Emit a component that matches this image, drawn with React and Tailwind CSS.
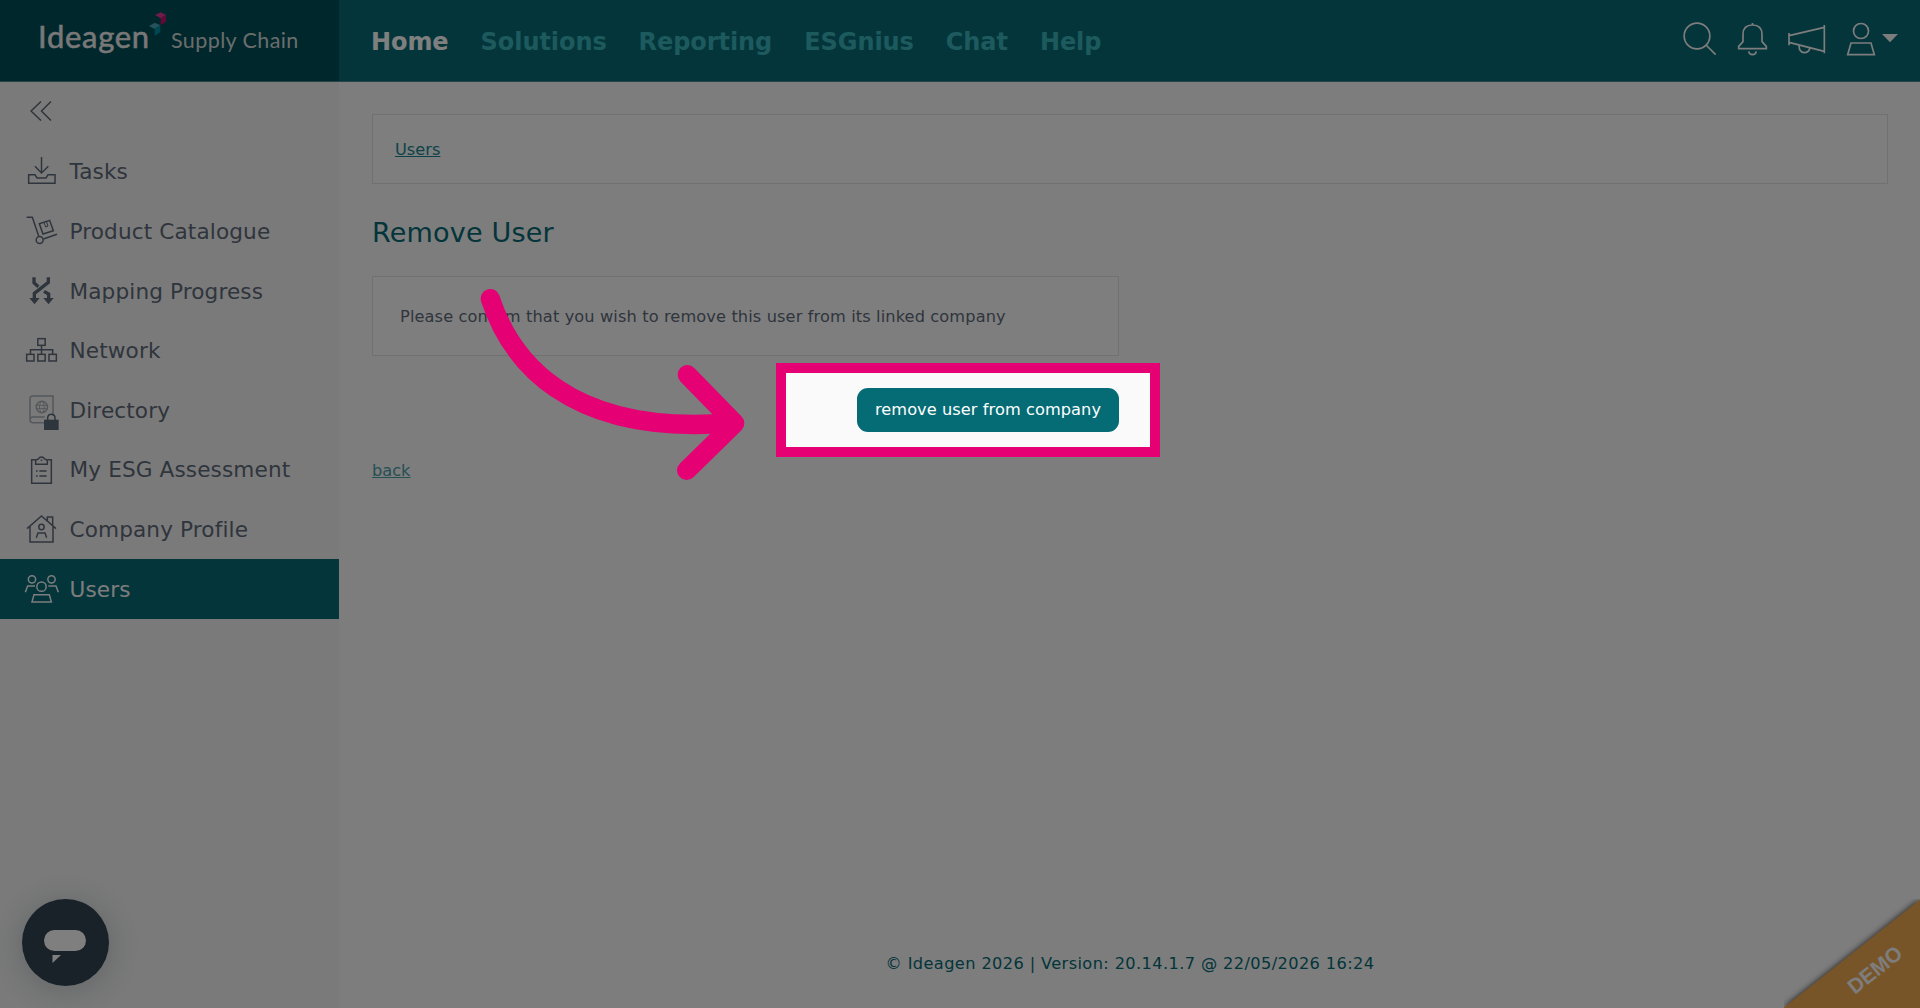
import React from 'react';

const ICON = 'size-9 shrink-0 fill-none stroke-current';

const TasksIcon = () => (
    <svg className={ICON} viewBox="72 70 108 108" strokeWidth="4.500">
        <path d="M124.500 82V129M105 110L124.500 130L145 110" />
        <path d="M86 135H105L111 145H138L144 135H165V161H86Z" />
    </svg>
);

const CatalogueIcon = () => (
    <svg className={ICON} viewBox="72 249 108 108" strokeWidth="4.500">
        <path d="M80 262H97L116 318M130 327L171 313" />
        <circle cx="119" cy="330" r="10.500" />
        <path d="M118 281L149 271L160 302L129 312Z" />
        <path d="M132 277L137 291L144 288L139 274" strokeWidth="3" />
    </svg>
);

const MappingIcon = () => (
    <svg className={ICON} viewBox="72 428 108 108" strokeWidth="10">
        <path d="M102 441V457L115 469" />
        <path d="M145 441V456L103 489V506" />
        <path d="M132 483L146 491V506" />
        <path d="M88 503H119L103.500 522ZM130 503H161L145.500 522Z" fill="currentColor" stroke="none" />
    </svg>
);

const NetworkIcon = () => (
    <svg className={ICON} viewBox="72 607 108 108" strokeWidth="4.500">
        <rect x="113.500" y="627" width="22" height="20" />
        <path d="M124.500 647V673M91.500 673V660H158V673" />
        <rect x="80" y="674" width="22" height="20" />
        <rect x="113.500" y="674" width="22" height="20" />
        <rect x="147" y="674" width="22" height="20" />
    </svg>
);

const DirectoryIcon = () => (
    <svg className={ICON} viewBox="72 36 108 108" strokeWidth="4.500" overflow="visible">
        <g opacity="0.5">
            <path d="M159 108V48H99Q90 48 90 57V119Q90 128 99 128H132M90 119Q91 111 99 111H134" />
            <circle cx="125.500" cy="81" r="17" />
            <ellipse cx="125.500" cy="81" rx="7" ry="17" strokeWidth="3" />
            <path d="M109 76H142M109 86H142" strokeWidth="3" />
        </g>
        <path d="M132 119H176V150H132Z" fill="currentColor" stroke="none" />
        <path d="M143 120V113Q144 103 154 103Q164 103 165 113V120" />
    </svg>
);

const AssessmentIcon = () => (
    <svg className={ICON} viewBox="72 215 108 108" strokeWidth="4.500">
        <path d="M107 238H95V309H154V238H142" />
        <path d="M107 252V240L115 236Q118 230 124.500 230Q131 230 134 236L142 240V252Z" />
        <path d="M108 272H113M118 272H140M108 287H113M118 287H140" />
        <path d="M122 240H127" />
    </svg>
);

const ProfileIcon = () => (
    <svg className={ICON} viewBox="72 394 108 108" strokeWidth="4.500">
        <path d="M81 447L124.500 409L168 447M90 441V487H159V441M142 423V412H158V437" />
        <circle cx="124.500" cy="442" r="8" />
        <path d="M109 474L114 460H135L140 474" />
    </svg>
);

const UsersIcon = () => (
    <svg className={ICON} viewBox="72 573 108 108" strokeWidth="4.500" overflow="visible">
        <circle cx="96" cy="598" r="11" />
        <circle cx="154.500" cy="598" r="11" />
        <circle cx="124.500" cy="620" r="14" />
        <path d="M76 637L83 618H105M175 637L168 618H145" />
        <path d="M102 644H148L154 666H96Z" />
    </svg>
);

const menu = [
    { name: 'Tasks', Icon: TasksIcon },
    { name: 'Product Catalogue', Icon: CatalogueIcon },
    { name: 'Mapping Progress', Icon: MappingIcon },
    { name: 'Network', Icon: NetworkIcon },
    { name: 'Directory', Icon: DirectoryIcon },
    { name: 'My ESG Assessment', Icon: AssessmentIcon },
    { name: 'Company Profile', Icon: ProfileIcon },
    { name: 'Users', Icon: UsersIcon, active: true },
];

const nav = ['Home', 'Solutions', 'Reporting', 'ESGnius', 'Chat', 'Help'];

function Logo() {
    return (
        <div className="w-[339px] h-full shrink-0 bg-[#004e57] flex items-baseline pl-[38px] pt-[14px] font-['Lato',sans-serif] leading-[44px] whitespace-nowrap">
            <span className="w-[111px] text-[31px] tracking-[0.700px] text-[#f0f0f0] [-webkit-text-stroke:0.500px_#f0f0f0]">Ideagen</span>
            <svg className="w-[18px] h-6 self-start -mt-0.5" viewBox="446 37 54 72">
                <path d="M464 46L481 38L497 46L481 56Z" fill="#dc3c8c" />
                <path d="M481 56L497 46V67L481 77Z" fill="#c01470" />
                <path d="M446 79L463 69L480 77L463 88Z" fill="#4aa5b8" />
                <path d="M463 88L480 77V97L463 109Z" fill="#008ea4" />
            </svg>
            <span className="ml-[4px] text-[21.500px] tracking-[0.400px] text-[#d4dadb]">Supply Chain</span>
        </div>
    );
}

function Header() {
    return (
        <header className="h-[82px] flex bg-[#066b76] border-b border-[#4c8b92]">
            <Logo />
            <nav className="flex items-center gap-8 pl-8 pt-0.5 text-2xl font-bold tracking-[-0.070px]">
                {nav.map((item) => (
                    <a key={item} className={item === 'Home' ? 'text-white' : 'text-[#3bb4bc]'}>{item}</a>
                ))}
            </nav>
            <div className="ml-auto pr-[22px] pb-1 flex items-center text-[#fafafa]">
                <svg className="w-[34px] h-[34px] fill-none stroke-current" viewBox="69 66 102 102" strokeWidth="5">
                    <circle cx="111" cy="108" r="38.500" />
                    <path d="M138 135L167 164" />
                </svg>
                <svg className="w-[31px] h-[34px] ml-5 fill-none stroke-current" viewBox="231 66 93 102" strokeWidth="5">
                    <path d="M277.500 69V75M236 146V139L249 125V103Q249 75 277.500 75Q306 75 306 103V125L319 139V146Z" />
                    <path d="M266 154Q268 164 277.500 164Q287 164 289 154" />
                </svg>
                <svg className="w-[39px] h-[34px] ml-[19px] fill-none stroke-current" viewBox="382 66 117 102" strokeWidth="5">
                    <path d="M388 99V136M494 75V160M388 107L494 82M388 127L494 154M418 136Q418 158 434 158Q447 158 451 144" />
                </svg>
                <svg className="w-[30px] h-[34px] ml-5 fill-none stroke-current" viewBox="558 66 90 102" strokeWidth="5">
                    <circle cx="603" cy="93" r="22.500" />
                    <path d="M573 129H633L643 164H563Z" />
                </svg>
                <svg className="w-4 h-[34px] ml-1.5 fill-current" viewBox="666 66 48 102">
                    <path d="M666 102H714L690 127Z" />
                </svg>
            </div>
        </header>
    );
}

function Sidebar() {
    return (
        <aside className="w-[339px] shrink-0 bg-[#f5f5f5] text-[#5f6b7a]">
            <div className="h-[59.600px] pl-[30px] pt-[19px]">
                <svg className="w-[22px] h-5 fill-none stroke-current" viewBox="0 0 22 20" strokeWidth="1.500">
                    <path d="M11 0.500L1 10L11 19.500M21 0.500L11.500 10L21 19.500" />
                </svg>
            </div>
            {menu.map(({ name, Icon, active }) => (
                <div
                    key={name}
                    className={active
                        ? 'h-[59.650px] flex items-center gap-[9.500px] pl-6 text-[21.600px] tracking-[0.120px] bg-[#066b76] text-[#fafafa]'
                        : 'h-[59.650px] flex items-center gap-[9.500px] pl-6 text-[21.600px] tracking-[0.120px]'}
                >
                    <Icon />
                    <span className="pt-0.5">{name}</span>
                </div>
            ))}
        </aside>
    );
}

export default function App() {
    return (
        <div className="relative h-[1008px] overflow-hidden flex flex-col bg-[#fafafa] font-['Verdana','DejaVu_Sans',sans-serif] text-[16.200px]">
            <Header />

            <div className="flex flex-1">
                <Sidebar />
                <main className="flex-1 flex flex-col pl-[33px] pr-8 pt-8">
                    <div className="h-[70px] flex items-center pt-0.5 pl-[22px] bg-[#fdfdfd] border border-[#e2e2e2]">
                        <a className="text-[#168792] underline">Users</a>
                    </div>
                    <h1 className="mt-[29px] h-10 leading-10 text-[27px] tracking-[0.200px] text-[#066b76]">Remove User</h1>
                    <div className="mt-[23px] w-[747px] h-[80px] flex items-center pt-0.5 pl-[27px] bg-[#fdfdfd] border border-[#e2e2e2] text-[#5f6b7a] tracking-[0.120px]">
                        Please confirm that you wish to remove this user from its linked company
                    </div>
                    <div className="mt-8 w-[747px] flex justify-end">
                        <button className="w-[262px] h-11 rounded-[11px] bg-[#056c76] text-white tracking-[0.070px]">remove user from company</button>
                    </div>
                    <a className="mt-[27px] h-6 leading-6 text-[#4aa0a8] underline">back</a>
                    <footer className="mt-auto mb-8 h-6 leading-6 text-center text-[#066b76] tracking-[0.390px]">
                        © Ideagen 2026 | Version: 20.14.1.7 @ 22/05/2026 16:24
                    </footer>
                </main>
            </div>

            {/* chat launcher */}
            <div className="absolute left-[22px] bottom-[22px] size-[87px] rounded-full bg-[#344452] shadow-[0_4px_36px_rgba(0,40,50,0.22)]">
                <svg className="size-full fill-white" viewBox="0 0 87 87">
                    <rect x="22" y="31" width="42" height="21" rx="10.500" />
                    <path d="M30.500 56H39L30.500 64Z" />
                </svg>
            </div>

            {/* environment ribbon */}
            <div className="absolute right-0 bottom-0 w-[136px] h-[109px] overflow-hidden">
                <svg className="size-full" viewBox="0 0 136 109">
                    <path d="M0 108.500L136 0.500V109H0Z" fill="#f0aa50" className="drop-shadow-[0_0_3px_rgba(0,0,0,0.8)]" />
                </svg>
                <span className="absolute left-[59px] top-[59px] w-[64px] text-center font-['Liberation_Sans',sans-serif] font-bold text-[21px] leading-6 text-[#fafafa] -rotate-[38.500deg]">DEMO</span>
            </div>

            {/* spotlight: everything outside of the frame is dimmed */}
            <div className="absolute left-[776px] top-[363px] w-[384px] h-[94px] border-10 border-[#e50073] shadow-[0_0_0_2000px_rgba(0,0,0,0.5)]" />
            <svg className="absolute left-[350px] top-[200px] w-[420px] h-[300px] fill-none stroke-[#e50073]" viewBox="0 0 1260 900" strokeWidth="58" strokeLinecap="round" strokeLinejoin="round">
                <path d="M421 296C480 475 650 712 1150 668" />
                <path d="M1012 524L1154 670L1010 811" />
            </svg>
        </div>
    );
}
